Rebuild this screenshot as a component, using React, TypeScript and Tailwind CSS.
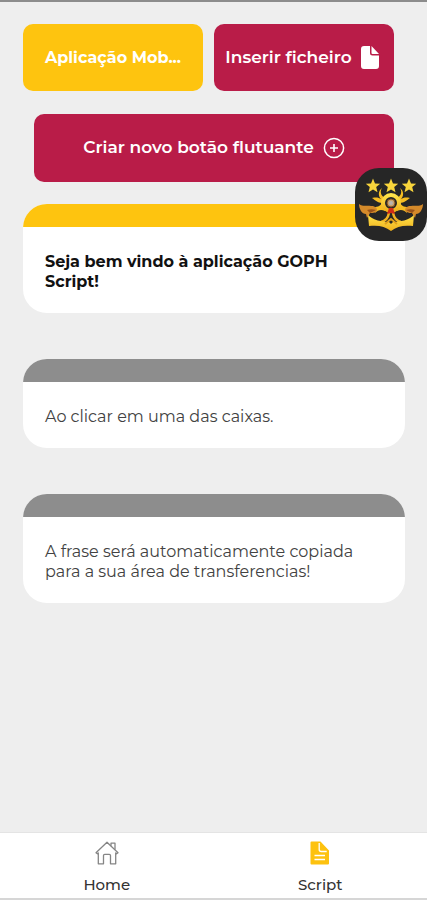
const cards = [
  { text: "Seja bem vindo à aplicação GOPH Script!", active: true },
  { text: "Ao clicar em uma das caixas.", active: false },
  {
    text: "A frase será automaticamente copiada para a sua área de transferencias!",
    active: false,
  },
];

function FileIcon() {
  return (
    <svg width="18" height="23" viewBox="0 0 18 23" fill="currentColor" aria-hidden="true">
      <path d="M3 0h6v7a2.5 2.5 0 0 0 2.5 2.500H18V20a3 3 0 0 1-3 3H3a3 3 0 0 1-3-3V3a3 3 0 0 1 3-3z" />
      <path d="M10.500 0 18 8h-6.500a1 1 0 0 1-1-1z" />
    </svg>
  );
}

function PlusCircleIcon() {
  return (
    <svg width="22" height="22" viewBox="0 0 22 22" fill="none" stroke="currentColor" aria-hidden="true">
      <circle cx="11" cy="11" r="9.6" strokeWidth="1.5" />
      <path d="M11 7v8M7 11h8" strokeWidth="1.6" />
    </svg>
  );
}

function HomeIcon() {
  return (
    <svg
      width="24"
      height="24"
      viewBox="0 0 24 24"
      fill="none"
      stroke="#858585"
      strokeWidth="1.3"
      strokeLinejoin="round"
      aria-hidden="true"
    >
      <path d="M1 11.8 12 1.2l11 10.6-1.4 1L20.7 12v10.8h-5.2v-8.2a1.2 1.2 0 0 0-1.2-1.2H9.7a1.2 1.2 0 0 0-1.2 1.2v8.2H3.3V12l-.9.8z" />
      <path d="M16 4.8V2.2h4v6.4" />
    </svg>
  );
}

function ScriptIcon() {
  return (
    <svg width="20" height="24" viewBox="0 0 20 24" aria-hidden="true">
      <path d="M1.500.5h9L19 9.500v13a1 1 0 0 1-1 1H1.500a1 1 0 0 1-1-1v-21a1 1 0 0 1 1-1z" fill="#fdc20f" />
      <path d="M9.200 2v6.500a2 2 0 0 0 2 2h5.500" fill="none" stroke="#fff" strokeWidth="1.300" />
      <path d="M4.500 14.500h10.500M4.500 18.500h10.500" stroke="#fff" strokeWidth="1.500" />
    </svg>
  );
}

function Emblem() {
  return (
    <svg viewBox="0 0 72 73" className="block size-full" aria-hidden="true">
      <defs>
        <linearGradient id="gold" x1="0" y1="0" x2="0" y2="1">
          <stop offset="0" stopColor="#ffe34a" />
          <stop offset="1" stopColor="#efb01c" />
        </linearGradient>
        <path id="star" d="M0-7.500 2-2.600 7.200-2.300 3.200 1 4.500 6.200 0 3.400-4.500 6.200-3.200 1-7.200-2.300-2-2.600z" />
      </defs>
      {/* horns and side prongs */}
      <g fill="#f6bd22">
        <path d="M27 20c-3 5 0 9 4 10l-4 5c-4 0-7-3-10-5 5-1 7 0 9 1-3-3-3-8 1-11z" />
        <path d="M45 20c3 5 0 9-4 10l4 5c4 0 7-3 10-5-5-1-7 0-9 1 3-3 3-8-1-11z" />
        <path d="M27 34c-1 4-4 5-8 5 2 1 2 3 1 6 3-3 6-4 10-2l3-2zM45 34c1 4 4 5 8 5-2 1-2 3-1 6-3-3-6-4-10-2l-3-2z" />
      </g>
      <circle cx="36" cy="35" r="8" fill="#262626" stroke="url(#gold)" strokeWidth="4" />
      <circle cx="36" cy="35" r="4" fill="#c9a06a" stroke="#7d4f1f" strokeWidth="1" />
      <circle cx="36" cy="35" r="2" fill="#b9b4b0" />
      {/* ribbon tails */}
      <path d="M4 36c4 3 8 1 12 2 4 0 6 2 6 4-1 3-4 3-7 3l-3 5-1-4c-4 0-7-5-7-10z" fill="#d58a2a" />
      <path d="M68 36c-4 3-8 1-12 2-4 0-6 2-6 4 1 3 4 3 7 3l3 5 1-4c4 0 7-5 7-10z" fill="#d58a2a" />
      <path d="M12 42c3-1 6-1 9 0l-6 3zM60 42c-3-1-6-1-9 0l6 3z" fill="#98521a" />
      <path d="M34 45c-1 5-3 8-8 9M38 45c1 5 3 8 8 9" fill="none" stroke="#f0b222" strokeWidth="2.500" />
      <path d="m34 40-2 6 4-1 4 1-2-6z" fill="#cf2c18" />
      <path d="M13 47c5 5 14 7 21 7l2 2 2-2c7 0 16-2 21-7l-1 11c-9-1-16 0-22 5-6-5-13-6-22-5z" fill="url(#gold)" />
      <path d="m30 56 6-5 6 5" fill="none" stroke="#e0a01c" strokeWidth="2" />
      <g fill="#f9d53c">
        <use href="#star" x="18" y="18" />
        <use href="#star" x="36" y="18" />
        <use href="#star" x="54" y="18" />
      </g>
    </svg>
  );
}

type CardProps = (typeof cards)[number];

function PhraseCard({ text, active }: CardProps) {
  return (
    <button type="button" className="block w-full overflow-hidden rounded-3xl bg-white text-left">
      <span className={active ? "block h-[23px] bg-[#fec40f]" : "block h-[23px] bg-[#8d8d8d]"} />
      <span
        className={
          active
            ? "block px-[22px] pt-[25px] pb-[21px] text-base leading-5 font-bold text-[#111111]"
            : "block px-[22px] pt-[25px] pb-[21px] text-base leading-5 text-[#424242]"
        }
      >
        {text}
      </span>
    </button>
  );
}

export default function App() {
  return (
    <div className="relative flex min-h-screen flex-col border-t-2 border-[#8c8c8c] bg-[#eeeeee] font-['Montserrat','Inter',sans-serif]">
      <main className="flex-1 px-[22px] pt-[22px] pl-[23px]">
        {/* Actions */}
        <div className="grid grid-cols-2 gap-[11px] pr-[11px]">
          <button
            type="button"
            className="h-[67px] min-w-0 rounded-[10px] bg-[#fec40f] px-2 text-base font-bold text-white"
          >
            Aplicação Mob...
          </button>
          <button
            type="button"
            className="flex h-[67px] min-w-0 items-center justify-center gap-[9px] rounded-[10px] bg-[#b91c48] pr-1 text-[17px] font-semibold whitespace-nowrap text-white"
          >
            Inserir ficheiro <FileIcon />
          </button>
        </div>
        <div className="mt-[23px] pr-[11px] pl-[11px]">
          <button
            type="button"
            className="flex h-[68px] w-full items-center justify-center gap-[9px] rounded-[10px] bg-[#b91c48] text-[17px] font-semibold text-white"
          >
            Criar novo botão flutuante <PlusCircleIcon />
          </button>
        </div>

        {/* Phrases */}
        <div className="mt-[22px] flex flex-col gap-[46px]">
          {cards.map((card) => (
            <PhraseCard key={card.text} {...card} />
          ))}
        </div>
      </main>

      {/* Floating bubble */}
      <button
        type="button"
        aria-label="GOPH Script"
        className="absolute top-[166px] right-0 h-[73px] w-[72px] overflow-hidden rounded-3xl bg-[#262626]"
      >
        <Emblem />
      </button>

      <nav className="flex border-t border-b-2 border-t-[#e4e4e4] border-b-[#d6d6d6] bg-white text-[15px] leading-5 font-medium text-[#333333]">
        <a href="#home" className="flex flex-1 flex-col items-center gap-[10px] pt-2 pb-[3px]">
          <HomeIcon />
          Home
        </a>
        <a href="#script" className="flex flex-1 flex-col items-center gap-[10px] pt-2 pb-[3px]">
          <ScriptIcon />
          Script
        </a>
      </nav>
    </div>
  );
}
